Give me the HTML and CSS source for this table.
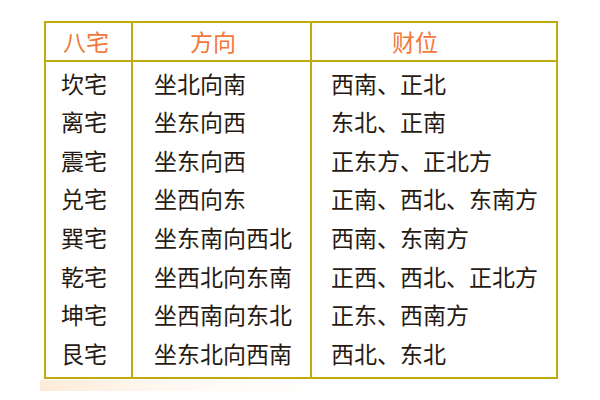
FILE: index.html
```html
<!DOCTYPE html>
<html lang="zh-CN">
<head>
<meta charset="utf-8">
<title>八宅财位</title>
<link rel="stylesheet" href="styles.css">
</head>
<body>
<div class="page">
  <table class="zhai">
    <thead>
      <tr>
        <th class="c1">八宅</th>
        <th class="c2">方向</th>
        <th class="c3">财位</th>
      </tr>
    </thead>
    <tbody>
      <tr><td class="c1">坎宅</td><td class="c2">坐北向南</td><td class="c3">西南、正北</td></tr>
      <tr><td class="c1">离宅</td><td class="c2">坐东向西</td><td class="c3">东北、正南</td></tr>
      <tr><td class="c1">震宅</td><td class="c2">坐东向西</td><td class="c3">正东方、正北方</td></tr>
      <tr><td class="c1">兑宅</td><td class="c2">坐西向东</td><td class="c3">正南、西北、东南方</td></tr>
      <tr><td class="c1">巽宅</td><td class="c2">坐东南向西北</td><td class="c3">西南、东南方</td></tr>
      <tr><td class="c1">乾宅</td><td class="c2">坐西北向东南</td><td class="c3">正西、西北、正北方</td></tr>
      <tr><td class="c1">坤宅</td><td class="c2">坐西南向东北</td><td class="c3">正东、西南方</td></tr>
      <tr class="last"><td class="c1">艮宅</td><td class="c2">坐东北向西南</td><td class="c3">西北、东北</td></tr>
    </tbody>
  </table>
  <div class="glow"></div>
</div>
</body>
</html>
```

FILE: styles.css
```css
html, body {
  margin: 0;
  padding: 0;
  background: #ffffff;
}

.page {
  width: 600px;
  height: 400px;
  padding: 21px 0 0 44px;
  box-sizing: border-box;
  font-family: "Noto Sans CJK SC", "Noto Sans", sans-serif;
}

.zhai {
  border-collapse: separate;
  border-spacing: 0;
  border: 2px solid #bfac0c;
  table-layout: fixed;
  width: 514px;
  font-size: 23px;
  color: #261a12;
}

.zhai th,
.zhai td {
  box-sizing: border-box;
  padding: 0;
  text-align: left;
  white-space: nowrap;
  vertical-align: top;
  font-weight: 400;
}

.zhai .c1 { width: 87px; border-right: 2px solid #bfac0c; }
.zhai .c2 { width: 179px; border-right: 2px solid #bfac0c; }
.zhai .c3 { width: 244px; }

.zhai th {
  color: #f2773a;
  line-height: 37px;
  height: 39px;
  border-bottom: 2px solid #bfac0c;
}

.zhai th.c1 { padding-left: 17px; }
.zhai th.c2 { padding-left: 57px; }
.zhai th.c3 { padding-left: 80px; }

.zhai td {
  line-height: 36px;
  padding-top: 2.6px;
}

.zhai td.c1 { padding-left: 15px; }
.zhai td.c2 { padding-left: 21px; }
.zhai td.c3 { padding-left: 19px; }

.zhai tr.last td { padding-bottom: 6px; }

.glow {
  width: 280px;
  height: 11px;
  margin-left: -4px;
  margin-top: 1px;
  background: linear-gradient(to right, rgba(253, 233, 212, 0.9), rgba(254, 242, 228, 0.6) 40%, rgba(255, 255, 255, 0));
}
```
